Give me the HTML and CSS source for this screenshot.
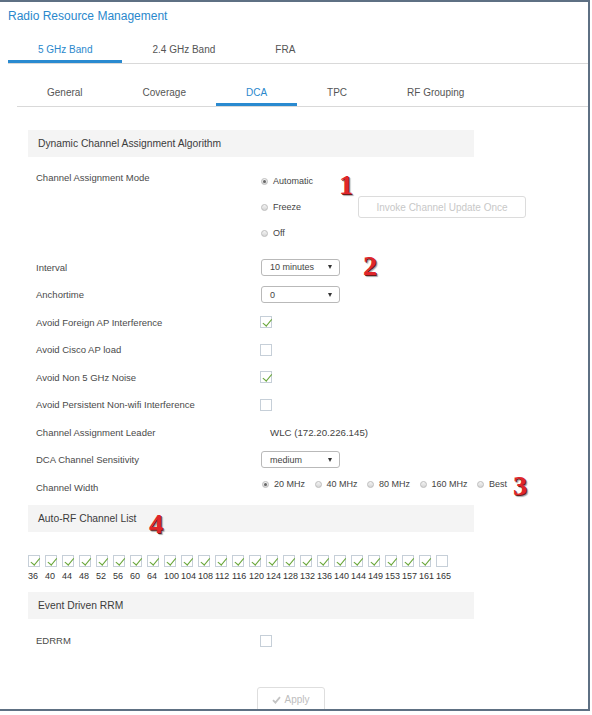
FILE: index.html
```html
<!DOCTYPE html>
<html>
<head>
<meta charset="utf-8">
<link rel="stylesheet" href="styles.css">
</head>
<body>
<div class="frame">
  <div class="title">Radio Resource Management</div>
  <div class="tabs main-tabs">
    <div class="tab active">5 GHz Band</div>
    <div class="tab">2.4 GHz Band</div>
    <div class="tab">FRA</div>
  </div>
  <div class="tabs sub-tabs">
    <div class="tab">General</div>
    <div class="tab">Coverage</div>
    <div class="tab active">DCA</div>
    <div class="tab">TPC</div>
    <div class="tab">RF Grouping</div>
  </div>

  <div class="content">
    <div class="section-head">Dynamic Channel Assignment Algorithm</div>

    <div class="row row-mode">
      <div class="label">Channel Assignment Mode</div>
      <div class="control">
        <div class="opt-line"><span class="mode-opt"><span class="radio on"></span>Automatic</span></div>
        <div class="opt-line"><span class="mode-opt"><span class="radio"></span>Freeze</span><button class="invoke">Invoke Channel Update Once</button></div>
        <div class="opt-line"><span class="mode-opt"><span class="radio"></span>Off</span></div>
      </div>
    </div>

    <div class="row first-row">
      <div class="label">Interval</div>
      <div class="control"><div class="select"><span>10 minutes</span><span class="caret"></span></div></div>
    </div>
    <div class="row">
      <div class="label">Anchortime</div>
      <div class="control"><div class="select"><span>0</span><span class="caret"></span></div></div>
    </div>
    <div class="row">
      <div class="label">Avoid Foreign AP Interference</div>
      <div class="control"><span class="cb on"></span></div>
    </div>
    <div class="row">
      <div class="label">Avoid Cisco AP load</div>
      <div class="control"><span class="cb"></span></div>
    </div>
    <div class="row">
      <div class="label">Avoid Non 5 GHz Noise</div>
      <div class="control"><span class="cb on"></span></div>
    </div>
    <div class="row">
      <div class="label">Avoid Persistent Non-wifi Interference</div>
      <div class="control"><span class="cb"></span></div>
    </div>
    <div class="row">
      <div class="label">Channel Assignment Leader</div>
      <div class="control"><span class="value">WLC (172.20.226.145)</span></div>
    </div>
    <div class="row">
      <div class="label">DCA Channel Sensitivity</div>
      <div class="control"><div class="select"><span>medium</span><span class="caret"></span></div></div>
    </div>
    <div class="row">
      <div class="label">Channel Width</div>
      <div class="control width-opts">
        <span class="w-opt"><span class="radio on"></span>20 MHz</span>
        <span class="w-opt"><span class="radio"></span>40 MHz</span>
        <span class="w-opt"><span class="radio"></span>80 MHz</span>
        <span class="w-opt"><span class="radio"></span>160 MHz</span>
        <span class="w-opt"><span class="radio"></span>Best</span>
      </div>
    </div>

    <div class="section-head head-gap">Auto-RF Channel List</div>

    <div class="channels">
      <div class="ch"><span class="cb on"></span><span class="num">36</span></div>
      <div class="ch"><span class="cb on"></span><span class="num">40</span></div>
      <div class="ch"><span class="cb on"></span><span class="num">44</span></div>
      <div class="ch"><span class="cb on"></span><span class="num">48</span></div>
      <div class="ch"><span class="cb on"></span><span class="num">52</span></div>
      <div class="ch"><span class="cb on"></span><span class="num">56</span></div>
      <div class="ch"><span class="cb on"></span><span class="num">60</span></div>
      <div class="ch"><span class="cb on"></span><span class="num">64</span></div>
      <div class="ch"><span class="cb on"></span><span class="num">100</span></div>
      <div class="ch"><span class="cb on"></span><span class="num">104</span></div>
      <div class="ch"><span class="cb on"></span><span class="num">108</span></div>
      <div class="ch"><span class="cb on"></span><span class="num">112</span></div>
      <div class="ch"><span class="cb on"></span><span class="num">116</span></div>
      <div class="ch"><span class="cb on"></span><span class="num">120</span></div>
      <div class="ch"><span class="cb on"></span><span class="num">124</span></div>
      <div class="ch"><span class="cb on"></span><span class="num">128</span></div>
      <div class="ch"><span class="cb on"></span><span class="num">132</span></div>
      <div class="ch"><span class="cb on"></span><span class="num">136</span></div>
      <div class="ch"><span class="cb on"></span><span class="num">140</span></div>
      <div class="ch"><span class="cb on"></span><span class="num">144</span></div>
      <div class="ch"><span class="cb on"></span><span class="num">149</span></div>
      <div class="ch"><span class="cb on"></span><span class="num">153</span></div>
      <div class="ch"><span class="cb on"></span><span class="num">157</span></div>
      <div class="ch"><span class="cb on"></span><span class="num">161</span></div>
      <div class="ch"><span class="cb"></span><span class="num">165</span></div>
    </div>

    <div class="section-head event-gap">Event Driven RRM</div>

    <div class="row edrrm-row">
      <div class="label">EDRRM</div>
      <div class="control"><span class="cb"></span></div>
    </div>

    <div class="apply">
      <svg class="apply-check" width="9" height="8" viewBox="0 0 9 8"><path d="M1 4.2 L3.4 6.6 L8 1.2" fill="none" stroke="#c4c4c4" stroke-width="1.8"/></svg>
      <span>Apply</span>
    </div>
  </div>

  <div class="mark m1">1</div>
  <div class="mark m2">2</div>
  <div class="mark m3">3</div>
  <div class="mark m4">4</div>
</div>
</body>
</html>
```

FILE: styles.css
```css
* {
  box-sizing: border-box;
}

body {
  margin: 0;
  font-family: "Liberation Sans", Arial, sans-serif;
  color: #4a4a4a;
  background: #fff;
}

.frame {
  position: relative;
  width: 590px;
  height: 711px;
  border: 2px solid #5e7083;
  border-left: none;
  overflow: hidden;
  background: #fff;
}

.title {
  margin: 6px 0 0 8px;
  font-size: 12px;
  line-height: 16px;
  color: #2a88cc;
}

.tabs {
  display: flex;
  border-bottom: 1px solid #d9d9d9;
}

.main-tabs {
  margin: 12px 0 0 8px;
}

.sub-tabs {
  margin: 15px 0 0 17px;
}

.tab {
  padding: 7px 30px 3px;
  font-size: 10px;
  line-height: 14px;
  color: #555;
  border-bottom: 3px solid transparent;
  white-space: nowrap;
}

.tab.active {
  color: #2a88cc;
  border-bottom-color: #2a8ad0;
}

.content {
  padding: 23px 0 0 28px;
}

.section-head {
  width: 446px;
  height: 27px;
  line-height: 27px;
  padding-left: 10px;
  background: #f4f4f4;
  font-size: 10.3px;
  color: #3c3c3c;
}

.row {
  display: grid;
  grid-template-columns: 232px 1fr;
  align-items: center;
  height: 27.5px;
}

.label {
  padding-left: 8px;
  font-size: 9.5px;
  color: #4a4a4a;
  white-space: nowrap;
}

.control {
  display: flex;
  align-items: center;
}

.row-mode {
  height: auto;
  align-items: start;
  margin-top: 11px;
}

.row-mode .label {
  line-height: 20px;
}

.row-mode .control {
  flex-direction: column;
  align-items: stretch;
}

.opt-line {
  display: flex;
  align-items: center;
  height: 26px;
  font-size: 9px;
  color: #444;
}

.mode-opt {
  display: flex;
  align-items: center;
  width: 98px;
}

.first-row {
  margin-top: 7.25px;
}

.radio {
  position: relative;
  flex: none;
  width: 7px;
  height: 7px;
  margin: 0 5px 0 1px;
  border-radius: 50%;
  border: 1px solid #bdbdbd;
  background: linear-gradient(#f4f4f4, #d6d6d6);
}

.radio.on::after {
  content: "";
  position: absolute;
  left: 1px;
  top: 1px;
  width: 3px;
  height: 3px;
  border-radius: 50%;
  background: #666;
}

.invoke {
  width: 168px;
  height: 22px;
  padding: 0;
  border: 1px solid #dcdcdc;
  border-radius: 3px;
  background: #fff;
  color: #c8c8c8;
  font: 10px "Liberation Sans", Arial, sans-serif;
}

.select {
  display: flex;
  align-items: center;
  justify-content: space-between;
  width: 79px;
  height: 17px;
  margin-left: 1px;
  padding: 0 7px 0 8px;
  border: 1px solid #b9b9b9;
  border-radius: 3px;
  font-size: 9px;
  color: #444;
  background: #fff;
}

.caret {
  width: 0;
  height: 0;
  border-left: 2.5px solid transparent;
  border-right: 2.5px solid transparent;
  border-top: 4px solid #333;
}

.cb {
  position: relative;
  display: block;
  width: 12px;
  height: 12px;
  border: 1px solid #c6cfd8;
  background: #fff;
}

.cb.on::after {
  content: "";
  position: absolute;
  left: 3.5px;
  top: 0.3px;
  width: 3.6px;
  height: 7.6px;
  border: solid #68a638;
  border-width: 0 1.8px 1.8px 0;
  transform: rotate(40deg);
}

.value {
  padding-left: 10px;
  font-size: 9.7px;
  color: #444;
}

.width-opts {
  margin-bottom: 6px;
  font-size: 9px;
  color: #444;
}

.w-opt {
  display: flex;
  align-items: center;
  margin-right: 7.5px;
  white-space: nowrap;
}

.w-opt .radio {
  margin-left: 2px;
}

.head-gap {
  margin-top: 4.25px;
}

.channels {
  display: flex;
  margin-top: 23px;
}

.ch {
  flex: none;
  width: 17px;
}

.num {
  display: block;
  margin-top: 3px;
  font-size: 9px;
  line-height: 12px;
  color: #333;
  white-space: nowrap;
}

.event-gap {
  margin-top: 10px;
}

.edrrm-row {
  margin-top: 8px;
}

.apply {
  display: flex;
  align-items: center;
  justify-content: center;
  gap: 3px;
  width: 68px;
  height: 26px;
  margin: 32px 0 0 229px;
  border: 1px solid #dedede;
  border-radius: 3px;
  color: #bdbdbd;
  font-size: 10px;
}

.mark {
  position: absolute;
  font-family: "Liberation Serif", "Times New Roman", serif;
  font-weight: bold;
  font-size: 28px;
  line-height: 28px;
  color: #e0262b;
  text-shadow: 1px 1px 0 #6b1b1b, 2px 2px 1px rgba(0, 0, 0, 0.35);
}

.m1 { left: 339px; top: 168.5px; }
.m2 { left: 363px; top: 250px; }
.m3 { left: 513px; top: 469.5px; }
.m4 { left: 149px; top: 507.5px; }
```
